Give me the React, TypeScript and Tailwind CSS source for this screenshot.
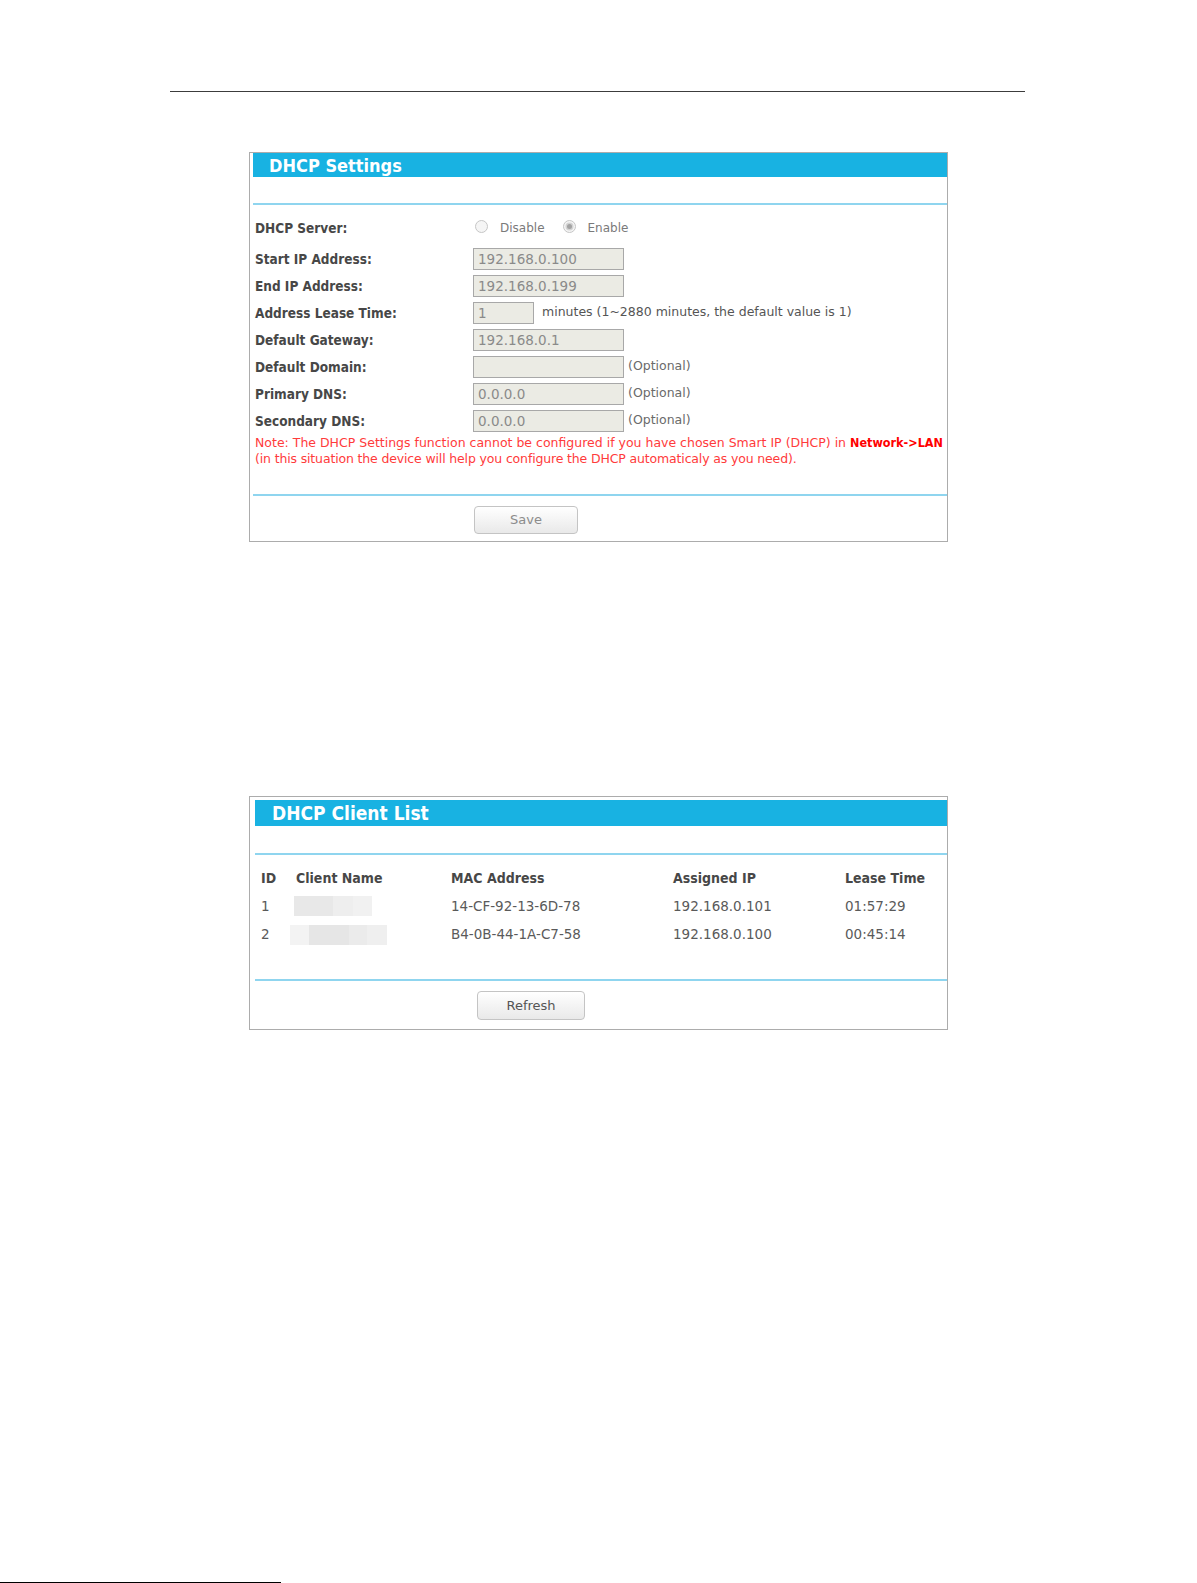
import React from 'react';

const boldFont = "font-['DejaVu_Sans_Condensed','DejaVu_Sans',sans-serif] font-bold";
const textFont = "font-['DejaVu_Sans','Liberation_Sans',sans-serif]";

const fields = [
  { label: 'Start IP Address:', value: '192.168.0.100', box: 'w-[151px]', note: '' },
  { label: 'End IP Address:', value: '192.168.0.199', box: 'w-[151px]', note: '' },
  { label: 'Address Lease Time:', value: '1', box: 'w-[61px]', note: 'minutes (1~2880 minutes, the default value is 1)' },
  { label: 'Default Gateway:', value: '192.168.0.1', box: 'w-[151px]', note: '' },
  { label: 'Default Domain:', value: '', box: 'w-[151px]', note: '(Optional)' },
  { label: 'Primary DNS:', value: '0.0.0.0', box: 'w-[151px]', note: '(Optional)' },
  { label: 'Secondary DNS:', value: '0.0.0.0', box: 'w-[151px]', note: '(Optional)' },
];

const clients = [
  {
    id: '1',
    mac: '14-CF-92-13-6D-78',
    ip: '192.168.0.101',
    lease: '01:57:29',
    blur: (
      <div className="flex h-[20px] ml-[-2px]">
        <div className="w-[39px] bg-[#e8e8e8]" />
        <div className="w-[20px] bg-[#eeeeee]" />
        <div className="w-[19px] bg-[#f1f1f1]" />
      </div>
    ),
  },
  {
    id: '2',
    mac: 'B4-0B-44-1A-C7-58',
    ip: '192.168.0.100',
    lease: '00:45:14',
    blur: (
      <div className="flex h-[20px] ml-[-6px] mt-[2px]">
        <div className="w-[19px] bg-[#f3f3f3]" />
        <div className="w-[40px] bg-[#e6e6e6]" />
        <div className="w-[18px] bg-[#ebebeb]" />
        <div className="w-[20px] bg-[#efefef]" />
      </div>
    ),
  },
];

const Radio: React.FC<{ checked?: boolean }> = ({ checked }) => (
  <div className="w-[13px] h-[13px] rounded-full border border-[#c6c6c6] bg-[#f5f5f5] flex items-center justify-center">
    {checked && <div className="w-[5px] h-[5px] rounded-full bg-[#a3a3a3] shadow-[0_0_0_1.5px_#d4d4d4]" />}
  </div>
);

const Button: React.FC<{ label: string; className: string }> = ({ label, className }) => (
  <div
    className={`${className} rounded-[4px] border border-[#c4c4c4] bg-gradient-to-b from-[#ffffff] to-[#e9e9e9] flex items-center justify-center text-[13px] ${textFont}`}
  >
    {label}
  </div>
);

const App: React.FC = () => {
  return (
    <div className="relative w-[1197px] h-[1583px] bg-white overflow-hidden flex flex-col">
      {/* page rule */}
      <div className="mt-[91px] ml-[170px] w-[855px] h-px bg-[#3c3c3c]" />

      {/* DHCP Settings */}
      <div className="mt-[60px] ml-[249px] w-[699px] border border-[#acacac]">
        <div className={`ml-[3px] h-[24px] bg-[#18b2e2] flex items-center pl-[16px] text-white text-[18px] ${boldFont}`}>
          DHCP Settings
        </div>
        <div className="h-[26px]" />
        <div className="ml-[3px] h-[2px] bg-[#8fd5ef]" />

        <div className="pl-[5px] pt-[12px]">
          <div className="flex items-center h-[22px]">
            <div className={`w-[218px] text-[13.5px] text-[#474747] ${boldFont}`}>DHCP Server:</div>
            <div className={`flex items-center text-[12px] text-[#7a7a7a] ${textFont}`}>
              <div className="ml-[2px] mt-[-3px]"><Radio /></div>
              <span className="ml-[12px]">Disable</span>
              <div className="ml-[18px] mt-[-3px]"><Radio checked /></div>
              <span className="ml-[12px]">Enable</span>
            </div>
          </div>

          <div className="mt-[9px] flex flex-col gap-[5px]">
            {fields.map((f) => (
              <div key={f.label} className="flex items-center h-[22px]">
                <div className={`w-[218px] text-[13.5px] text-[#474747] ${boldFont}`}>{f.label}</div>
                <div
                  className={`${f.box} h-[22px] border border-[#a8a8a8] bg-[#ebebe4] flex items-center pl-[4px] text-[13.5px] text-[#8a8a8a] ${textFont}`}
                >
                  {f.value}
                </div>
                {f.note && (
                  <span
                    className={`${f.box === 'w-[61px]' ? 'ml-[8px] text-[#555555]' : 'ml-[4px] text-[#6a6a6a]'} mt-[-2px] text-[12.5px] whitespace-nowrap ${textFont}`}
                  >
                    {f.note}
                  </span>
                )}
              </div>
            ))}
          </div>

          <div className={`mt-[3px] text-[12.5px] leading-[16px] text-[#ff3b3b] whitespace-nowrap ${textFont}`}>
            <div>
              Note: The DHCP Settings function cannot be configured if you have chosen Smart IP (DHCP) in{' '}
              <span className={`text-[#ff0000] ${boldFont}`}>Network-&gt;LAN</span>
            </div>
            <div className="tracking-[-0.15px]">(in this situation the device will help you configure the DHCP automaticaly as you need).</div>
          </div>
        </div>

        <div className="mt-[27px] ml-[3px] h-[2px] bg-[#8fd5ef]" />
        <div className="pt-[10px] pb-[7px]">
          <Button label="Save" className="ml-[224px] w-[104px] h-[28px] text-[#8c8c8c]" />
        </div>
      </div>

      {/* DHCP Client List */}
      <div className="mt-[254px] ml-[249px] w-[699px] border border-[#acacac]">
        <div className={`mt-[3px] ml-[5px] h-[26px] bg-[#18b2e2] flex items-center pl-[17px] text-white text-[19px] ${boldFont}`}>
          DHCP Client List
        </div>
        <div className="h-[27px]" />
        <div className="ml-[5px] h-[2px] bg-[#8fd5ef]" />

        <div className="ml-[5px] mt-[9px]">
          <div className={`grid grid-cols-[41px_155px_222px_172px_1fr] h-[28px] items-center text-[14px] text-[#474747] ${boldFont}`}>
            <div className="pl-[6px]">ID</div>
            <div>Client Name</div>
            <div>MAC Address</div>
            <div>Assigned IP</div>
            <div>Lease Time</div>
          </div>
          {clients.map((c) => (
            <div
              key={c.id}
              className={`grid grid-cols-[41px_155px_222px_172px_1fr] h-[28px] items-center text-[13.5px] text-[#5a5a5a] ${textFont}`}
            >
              <div className="pl-[6px]">{c.id}</div>
              <div>{c.blur}</div>
              <div>{c.mac}</div>
              <div>{c.ip}</div>
              <div>{c.lease}</div>
            </div>
          ))}
        </div>

        <div className="mt-[31px] ml-[5px] h-[2px] bg-[#8fd5ef]" />
        <div className="pt-[10px] pb-[9px]">
          <Button label="Refresh" className="ml-[227px] w-[108px] h-[29px] text-[#555555]" />
        </div>
      </div>

      {/* footer rule */}
      <div className="mt-auto w-[281px] h-px bg-black" />
    </div>
  );
};

export default App;
